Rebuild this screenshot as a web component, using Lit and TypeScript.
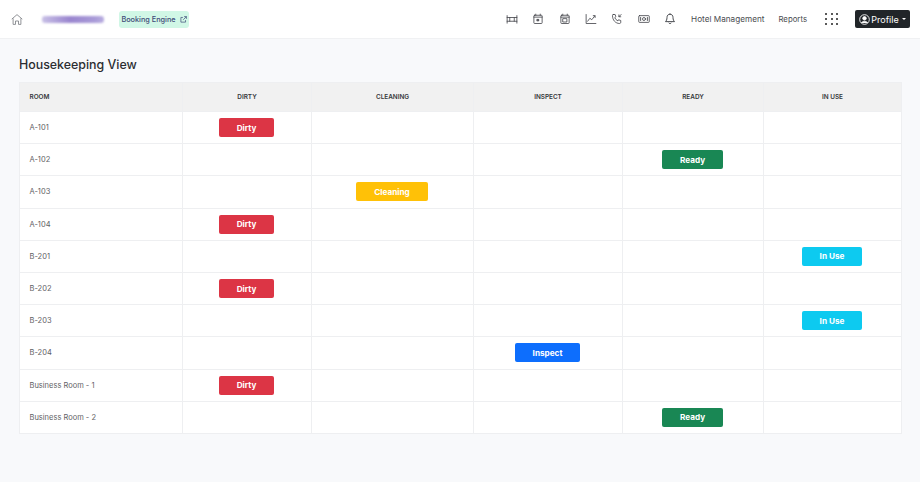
import { LitElement, html, css, svg } from "lit";
import { customElement } from "lit/decorators.js";

type Status = "Dirty" | "Cleaning" | "Inspect" | "Ready" | "In Use";
const COLS: Status[] = ["Dirty", "Cleaning", "Inspect", "Ready", "In Use"];
const ROWS: [string, Status][] = [
  ["A-101", "Dirty"], ["A-102", "Ready"], ["A-103", "Cleaning"], ["A-104", "Dirty"],
  ["B-201", "In Use"], ["B-202", "Dirty"], ["B-203", "In Use"], ["B-204", "Inspect"],
  ["Business Room - 1", "Dirty"], ["Business Room - 2", "Ready"],
];
const CLS: Record<Status, string> = { Dirty: "dirty", Cleaning: "cleaning", Inspect: "inspect", Ready: "ready", "In Use": "inuse" };

const ic = (body: unknown) => html`<svg class="ic" viewBox="0 0 16 16" fill="none" stroke="currentColor" stroke-width="1.1" stroke-linecap="round" stroke-linejoin="round">${body}</svg>`;
const ICONS = [
  svg`<path d="M1.500 3.500v10M14.500 3.500v10M1.500 11h13M1.500 6h13M5 6v5M11 6v5"/>`,
  svg`<rect x="2.500" y="3" width="11" height="11" rx="1"/><path d="M2.500 5.500h11M5 1.500V3M11 1.500V3"/><rect x="7" y="8.500" width="2" height="2" fill="currentColor"/>`,
  svg`<rect x="2.500" y="3" width="11" height="11" rx="1"/><path d="M2.500 5.500h11M5 1.500V3M11 1.500V3"/><rect x="5.500" y="7.500" width="5" height="4.500"/>`,
  svg`<path d="M1.500 2v12h13M3.500 11l3-4 2.500 2 4-5"/><path d="M11 3.500h2.500V6"/>`,
  svg`<path d="M3 2h2.500l1 3-1.500 1.200c.8 2 2.300 3.500 4.300 4.300L10 9l3 1v2.500c0 .8-.7 1.500-1.500 1.500C6 14 2 9.500 2 3.500 2 2.700 2.300 2 3 2z"/><path d="M13.500 2l-3 3M10.500 2.500V5H13"/>`,
  svg`<rect x="1" y="3.500" width="14" height="9" rx="1"/><circle cx="8" cy="8" r="2"/><path d="M3.500 6v4M12.500 6v4" stroke-width="1.200"/>`,
  svg`<path d="M8 1.500c-2.700 0-4 2-4 4.500 0 3-1 4.500-2 5.500h12c-1-1-2-2.500-2-5.500 0-2.500-1.300-4.500-4-4.500z" stroke-width="1.300"/><path d="M6.500 13.500c.4 1 2.600 1 3 0" stroke-width="1.300"/>`,
];

@customElement("app-root")
export class AppRoot extends LitElement {
  static styles = css`
    :host { display: block; min-height: 482px; background: #f8f9fb; font-family: "Inter", "Lato", "Liberation Sans", sans-serif; color: #333; overflow: hidden; }
    .nav { height: 38px; background: #fff; border-bottom: 1px solid #f0f1f3; display: flex; align-items: center; padding: 0 10px 0 11px; }
    .home { width: 12px; height: 13px; color: #7b7d82; display: flex; }
    .home svg { width: 12px; height: 13px; }
    .brand { margin-left: 19px; width: 62px; display: block; }
    .smudge { display: block; height: 7px; border-radius: 3px; background: linear-gradient(90deg,#c8c0e6,#9a86cf 45%,#a99bd8 85%,#b9aee0); filter: blur(1.300px); }
    .engine { margin-left: 15px; height: 17px; width: 70px; box-sizing: border-box; background: #d1f7e6; border-radius: 3px; display: flex; align-items: center; justify-content: center; gap: 4px; font-size: 7.300px; font-weight: 500; color: #3d4a78; white-space: nowrap; }
    .engine svg { width: 7px; height: 7px; }
    .spacer { flex: 1; }
    .icons { display: flex; gap: 14.400px; align-items: center; color: #45474c; }
    .ic { width: 12px; height: 12px; display: block; }
    .link { font-size: 8.200px; color: #4a4c50; white-space: nowrap; }
    .hm { margin-left: 15px; }
    .rp { margin-left: 14px; font-size: 7.800px; }
    .grid { margin-left: 18px; width: 13px; height: 12px; display: grid; grid-template-columns: repeat(3, 2px); justify-content: space-between; align-content: space-between; }
    .grid i { width: 2px; height: 2px; background: #222; border-radius: 50%; }
    .profile { margin-left: 17px; width: 55px; height: 18px; background: #212529; border-radius: 2px; color: #fff; display: flex; align-items: center; justify-content: center; gap: 1px; font-size: 9px; font-weight: 400; }
    .profile svg { width: 11px; height: 11px; }
    .caret { width: 0; height: 0; border: 2.500px solid transparent; border-top-color: #fff; border-bottom: 0; margin-left: 2px; }
    main { padding: 17px 19px 0; }
    h1 { margin: 0 0 8px; font-size: 12.400px; line-height: 18px; font-weight: 500; color: #2b2d31; }
    table { width: 882px; table-layout: fixed; border-collapse: collapse; background: #fff; font-size: 7.500px; }
    th, td { border: 1px solid #eeeff1; padding: 0; }
    th { height: 28px; background: #f1f1f1; font-weight: 600; font-size: 6.400px; color: #35373b; text-align: center; }
    td { height: 31.200px; text-align: center; color: #5f6165; padding-right: 1px; }
    th.room, td.room { text-align: left; padding-left: 9.500px; padding-right: 0; }
    .b { display: inline-flex; align-items: center; justify-content: center; height: 19px; border-radius: 2px; color: #fff; font-size: 8.200px; font-weight: 700; vertical-align: middle; }
    .dirty { background: #dc3545; width: 55px; }
    .cleaning { background: #ffc107; width: 72px; }
    .inspect { background: #0d6efd; width: 65px; }
    .ready { background: #198754; width: 61px; }
    .inuse { background: #0dcaf0; width: 60px; }
  `;

  render() {
    return html`
      <div class="nav">
        <span class="home"><svg viewBox="0 0 16 16" fill="none" stroke="currentColor" stroke-width="1.100" stroke-linejoin="round"><path d="M1 7.500 8 1.500l7 6M2.800 6.500V14.500H6V10h4v4.500h3.200V6.500"/></svg></span>
        <span class="brand"><span class="smudge"></span></span>
        <span class="engine">Booking Engine
          <svg viewBox="0 0 12 12" fill="none" stroke="currentColor" stroke-width="1.200"><path d="M9.500 7v3.500h-8v-8H5M7 1h4v4M11 1 5.500 6.500"/></svg>
        </span>
        <span class="spacer"></span>
        <div class="icons">${ICONS.map((b) => ic(b))}</div>
        <span class="link hm">Hotel Management</span>
        <span class="link rp">Reports</span>
        <span class="grid">${Array.from({ length: 9 }, () => html`<i></i>`)}</span>
        <span class="profile">
          <svg viewBox="0 0 16 16" fill="none" stroke="#fff" stroke-width="1.300"><circle cx="8" cy="8" r="7"/><circle cx="8" cy="6.300" r="2.500" fill="#fff"/><path d="M3.500 13c1-3 8-3 9 0" fill="#fff"/></svg>
          Profile<span class="caret"></span>
        </span>
      </div>
      <main>
        <h1>Housekeeping View</h1>
        <table>
          <colgroup>
            <col style="width:163px" /><col style="width:129px" /><col style="width:162px" />
            <col style="width:149px" /><col style="width:141px" /><col style="width:138px" />
          </colgroup>
          <thead>
            <tr>
              <th class="room">ROOM</th>
              ${COLS.map((c) => html`<th>${c.toUpperCase()}</th>`)}
            </tr>
          </thead>
          <tbody>
            ${ROWS.map(([room, st]) => html`
              <tr>
                <td class="room">${room}</td>
                ${COLS.map((c) => html`<td>${c === st ? html`<span class="b ${CLS[c]}">${c}</span>` : ""}</td>`)}
              </tr>`)}
          </tbody>
        </table>
      </main>
    `;
  }
}
